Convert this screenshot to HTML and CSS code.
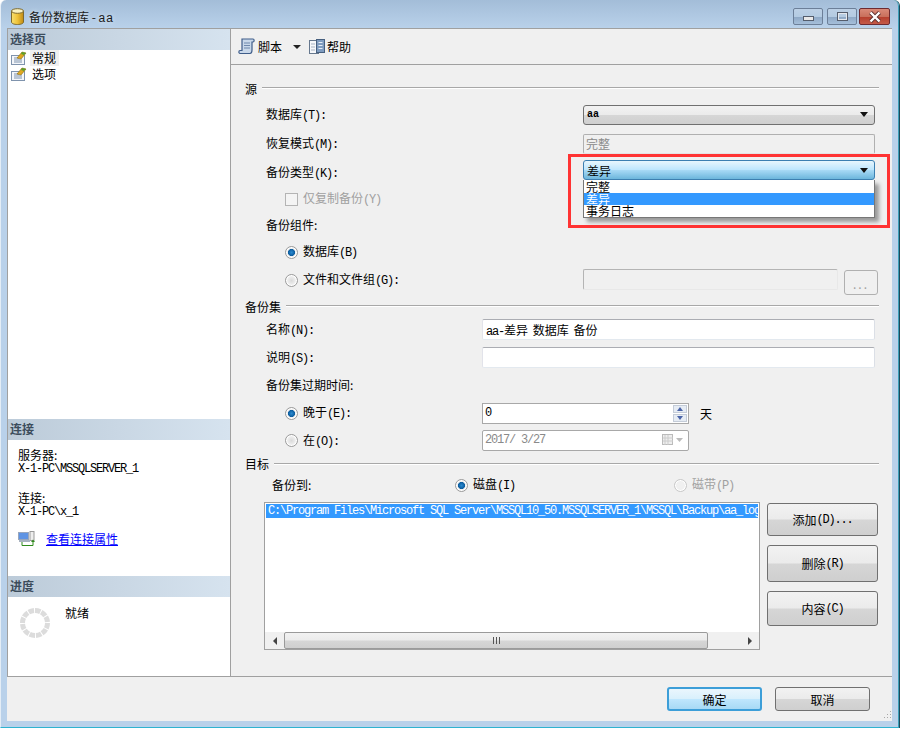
FILE: index.html
```html
<html>
  <head>
    <meta charset="utf-8">
    <link rel="stylesheet" href="styles.css">
    <title>备份数据库 - aa</title>
  </head>
  <body>
    <div class="window">
      <div class="titlebar">
        <svg class="dbicon" width="13" height="17" viewBox="0 0 13 17">
          <defs>
            <linearGradient id="gold" x1="0" x2="1" y1="0" y2="0">
              <stop offset="0" stop-color="#f8e070"/>
              <stop offset=".5" stop-color="#eec23a"/>
              <stop offset="1" stop-color="#c08a14"/>
            </linearGradient>
          </defs>
          <path d="M.5 3v11c0 1.500 2.500 2.500 6 2.500s6-1 6-2.500V3z" fill="url(#gold)" stroke="#7e6a2c"/>
          <ellipse cx="6.500" cy="3" rx="6" ry="2.300" fill="#fbf2c0" stroke="#7e6a2c"/>
        </svg>
        <span class="title">备份数据库 - <span class="titleLat">aa</span></span>
        <div class="capbtns">
          <div class="capbtn minbtn"><span class="glyphMin"></span></div>
          <div class="capbtn"><span class="glyphMax"></span></div>
          <div class="capbtn closebtn">
            <svg width="14" height="12" viewBox="0 0 14 12"><path d="M2.500 1.500l9 9M11.500 1.500l-9 9" stroke="#5a3030" stroke-width="4"/><path d="M2.500 1.500l9 9M11.500 1.500l-9 9" stroke="#fff" stroke-width="2.400"/></svg>
          </div>
        </div>
      </div>

      <div class="dialog">
        <div class="main">
          <div class="sidebar">
            <div class="sideHead">选择页</div>
            <div class="pages">
              <div class="pageItem">
                <svg class="pageIcon" width="16" height="14" viewBox="0 0 16 14"><use href="#pageGlyph"/></svg>
                <span class="pageText selected">常规</span>
              </div>
              <div class="pageItem">
                <svg class="pageIcon" width="16" height="14" viewBox="0 0 16 14"><use href="#pageGlyph"/></svg>
                <span class="pageText">选项</span>
              </div>
            </div>
            <div class="sideHead">连接</div>
            <div class="connBox">
              <div class="connLine">服务器:</div>
              <div class="connLine lat">X-1-PC\MSSQLSERVER_1</div>
              <div class="connLine connGap">连接:</div>
              <div class="connLine lat">X-1-PC\x_1</div>
              <div class="connLink">
                <svg width="18" height="15" viewBox="0 0 18 15">
                  <rect x="0.500" y="1.500" width="10" height="7" fill="#5f94e4" stroke="#98a6bc"/>
                  <rect x="12" y="0.500" width="4" height="9" fill="#eee" stroke="#9a9a9a"/>
                  <path d="M1 10h11" stroke="#a8b2c0" stroke-width="2"/>
                  <path d="M4 11v3.500h11v-4" fill="none" stroke="#2f8a1c"/>
                  <path d="M13 11l2-2.500 2 2.500z" fill="#2f8a1c"/>
                </svg>
                <a class="link" href="#">查看连接属性</a>
              </div>
            </div>
            <div class="sideHead">进度</div>
            <div class="progressBox">
              <svg width="30" height="30" viewBox="0 0 30 30">
                <circle cx="15" cy="15" r="12.500" fill="none" stroke="#dcdcdc" stroke-width="5" stroke-dasharray="5.500 1"/>
              </svg>
              <span class="ready">就绪</span>
            </div>
          </div>

          <div class="content">
            <div class="toolbar">
              <svg width="18" height="17" viewBox="0 0 18 17">
                <path d="M4 1h11c1.500 0 1.500 3 0 3h-1v8c0 1.500-.5 3.500-2 3.500H2c-1.500 0-1.500-3 0-3h2z" fill="#c9d8ea" stroke="#3f5d8a" stroke-width="1.200"/>
                <path d="M6 5h6M6 7.500h6M6 10h6" stroke="#6f88ac"/>
              </svg>
              <span class="toolText">脚本</span>
              <span class="toolArrow"></span>
              <svg class="helpIcon" width="16" height="16" viewBox="0 0 16 16">
                <rect x="0.500" y="1.500" width="9" height="13" fill="#f6f8fb" stroke="#66788e"/>
                <rect x="7.500" y="0.500" width="8" height="13" fill="#7f9cc0" stroke="#47607f"/>
                <path d="M9.500 3.500h4M9.500 6.500h4M9.500 9.500h4" stroke="#e6edf6"/>
                <path d="M2 5h4M2 8h4M2 11h4" stroke="#a8b4c4"/>
              </svg>
              <span class="toolText">帮助</span>
            </div>

            <div class="pane">
              <div class="groupHead r20"><span>源</span><i></i></div>
              <div class="row r33">
                <label class="col2">数据库<span class="lat">(T):</span></label>
                <div class="combo"><span class="lat comboLat">aa</span><b class="arrow"></b></div>
              </div>
              <div class="row r25">
                <label class="col2">恢复模式<span class="lat">(M):</span></label>
                <div class="readonly">完整</div>
              </div>
              <div class="row r28">
                <label class="col2 typeLab">备份类型<span class="lat">(K):</span></label>
                <div class="comboWrap">
                  <div class="combo active"><span>差异</span><b class="arrow"></b></div>
                  <ul class="dropdown">
                    <li>完整</li>
                    <li class="picked">差异</li>
                    <li>事务日志</li>
                  </ul>
                  <div class="redBox"></div>
                </div>
              </div>
              <div class="row r30 sub">
                <span class="check"></span>
                <label class="off">仅复制备份<span class="lat">(Y)</span></label>
              </div>
              <div class="row r24 lab">备份组件:</div>
              <div class="row r28 sub">
                <span class="radio on"></span>
                <label>数据库<span class="lat">(B)</span></label>
              </div>
              <div class="row r28 sub">
                <span class="radio"></span>
                <label class="fileLab">文件和文件组<span class="lat">(G):</span></label>
                <div class="fileInput"></div>
                <div class="dotsBtn">...</div>
              </div>

              <div class="groupHead r24"><span>备份集</span><i></i></div>
              <div class="row r22">
                <label class="col1">名称<span class="lat">(N):</span></label>
                <div class="input"><span class="lat">aa-</span>差异 数据库 备份</div>
              </div>
              <div class="row r34">
                <label class="col1">说明<span class="lat">(S):</span></label>
                <div class="input"></div>
              </div>
              <div class="row r22 lab expiry">备份集过期时间:</div>
              <div class="row r34 sub">
                <span class="radio on"></span>
                <label class="dateLab">晚于<span class="lat">(E):</span></label>
                <div class="spin">
                  <span class="lat">0</span>
                  <div class="spinBtns"><b class="up"></b><b class="down"></b></div>
                </div>
                <span class="unit">天</span>
              </div>
              <div class="row r20 sub">
                <span class="radio"></span>
                <label class="dateLab onDate">在<span class="lat">(O):</span></label>
                <div class="date">
                  <span class="lat">2017/ 3/27</span>
                  <svg class="calIcon" width="24" height="12" viewBox="0 0 24 12">
                    <rect x="0.500" y="0.500" width="10" height="10" fill="#eee" stroke="#bbb"/>
                    <path d="M3 1v10M6 1v10M1 4h10M1 7h10" stroke="#ccc"/>
                    <path d="M14 4h7l-3.500 4z" fill="#bbb"/>
                  </svg>
                </div>
              </div>

              <div class="groupHead r28 destHead"><span>目标</span><i></i></div>
              <div class="row r14 destRow">
                <label class="destLab">备份到:</label>
                <span class="radio on"></span>
                <label class="diskLab">磁盘<span class="lat">(I)</span></label>
                <span class="radio offRadio"></span>
                <label class="off">磁带<span class="lat">(P)</span></label>
              </div>

              <div class="dest">
                <div class="list">
                  <div class="listBody"><div class="listItem lat">C:\Program Files\Microsoft SQL Server\MSSQL10_50.MSSQLSERVER_1\MSSQL\Backup\aa_log</div></div>
                  <div class="hscroll">
                    <b class="scrollLeft"></b>
                    <div class="thumb"><em></em></div>
                    <b class="scrollRight"></b>
                  </div>
                </div>
                <div class="destBtns">
                  <div class="btn btnAdd">添加<span class="lat">(D)...</span></div>
                  <div class="btn btnDel">删除<span class="lat">(R)</span></div>
                  <div class="btn btnProps">内容<span class="lat">(C)</span></div>
                </div>
              </div>
            </div>
          </div>
        </div>

        <div class="footer">
          <div class="btn okBtn">确定</div>
          <div class="btn cancelBtn">取消</div>
          <svg class="grip" width="10" height="10" viewBox="0 0 10 10">
            <path d="M8 1h1v1H8zM5 4h1v1H5zM8 4h1v1H8zM2 7h1v1H2zM5 7h1v1H5zM8 7h1v1H8z" fill="#a8a8a8"/>
          </svg>
        </div>
      </div>
    </div>

    <svg width="0" height="0" class="defs">
      <defs>
        <g id="pageGlyph">
          <rect x="0.500" y="4.500" width="13" height="9" fill="#f4f6fa" stroke="#7f93ad"/>
          <path d="M3 7h5M3 9h8M3 11h8" stroke="#7f93ad"/>
          <path d="M6 7l5-6 4 1-5 6z" fill="#e0a820" stroke="#8a6a10" stroke-width=".6"/>
          <path d="M11 1l4 1-2 2-3-1z" fill="#5aa02c"/>
        </g>
      </defs>
    </svg>
  </body>
</html>
```

FILE: styles.css
```css
* {
  box-sizing: border-box;
}
html, body {
  margin: 0;
  background: #fff;
}
body {
  width: 903px;
  height: 740px;
  overflow: hidden;
  font-family: "Liberation Mono", "Noto Sans CJK SC", monospace;
  font-size: 12px;
  color: #000;
}
label {
  display: block;
  margin-bottom: 2px;
}
.defs {
  display: block;
}

.lat {
  font-family: "Liberation Mono", monospace;
  font-size: 12px;
  letter-spacing: -1.2px;
}
.window {
  width: 899px;
  height: 728px;
  background: linear-gradient(#a3bdd8 0, #b9d1ea 28px);
  border-left: 1px solid #e4edf6;
  border-right: 1px solid #3d9fb8;
  border-bottom: 1px solid #2fb3d0;
  border-radius: 6px 6px 0 0;
  box-shadow: 1px 0 0 #1e4a5c;
  display: flex;
  flex-direction: column;
  padding: 0 6px 6px 6px;
}
.titlebar {
  height: 28px;
  flex: none;
  display: flex;
  align-items: center;
  padding: 0 0 0 4px;
}
.dbicon {
  margin-top: 4px;
}
.title {
  margin-left: 5px;
  margin-top: 4px;
  font-family: "Noto Sans CJK SC", sans-serif;
  font-size: 12px;
  color: #1a1a1a;
  text-shadow: 0 0 4px #dfeaf6;
}
.titleLat {
  font-family: "Liberation Sans", sans-serif;
  letter-spacing: 1px;
}
.capbtns {
  margin-left: auto;
  margin-right: 2px;
  margin-top: 5px;
  display: flex;
  gap: 2px;
}
.capbtn {
  width: 30px;
  height: 17px;
  border: 1px solid #6c7f98;
  border-radius: 2px;
  background: linear-gradient(#bcd0e5 0, #b4cbe2 50%, #8fa9c6 55%, #a6bfda 100%);
  display: flex;
  align-items: center;
  justify-content: center;
}
.minbtn {
  margin-right: 2px;
}
.glyphMin {
  width: 11px;
  height: 5px;
  margin-top: 4px;
  background: #e8e8e8;
  border: 1px solid #555d6c;
}
.glyphMax {
  width: 11px;
  height: 9px;
  border: 2px solid #e4e8ee;
  outline: 1px solid #555d6c;
  outline-offset: -1px;
}
.closebtn {
  width: 31px;
  border-color: #6e2a30;
  background: linear-gradient(#d98a78 0, #c9705c 50%, #b6402e 55%, #c45a48 100%);
}

.dialog {
  flex: 1;
  min-height: 0;
  background: #f0f0f0;
  display: flex;
  flex-direction: column;
}
.main {
  height: 649px;
  flex: none;
  display: flex;
  border-top: 1px solid #a0a0a0;
  border-bottom: 1px solid #a0a0a0;
}

.sidebar {
  width: 224px;
  flex: none;
  background: #fff;
  border-right: 1px solid #a0a0a0;
  border-left: 1px solid #a0a0a0;
  display: flex;
  flex-direction: column;
}
.sideHead {
  height: 21px;
  flex: none;
  padding-left: 2px;
  line-height: 20px;
  font-family: "Noto Sans CJK SC", sans-serif;
  font-weight: 700;
  font-size: 12px;
  color: #3c4c5c;
  background: linear-gradient(90deg, #bccbd9, #d6e3ef);
}
.pages {
  height: 369px;
  flex: none;
}
.pageItem {
  height: 16px;
  display: flex;
  align-items: center;
  padding-left: 3px;
}
.pageIcon {
  flex: none;
}
.pageText {
  margin-left: 3px;
  padding: 0 3px 0 2px;
  line-height: 16px;
  font-family: "Noto Sans CJK SC", sans-serif;
}
.selected {
  background: #f0f0f0;
}
.connBox {
  height: 136px;
  flex: none;
  padding: 9px 0 0 10px;
}
.connLine {
  line-height: 12px;
  font-family: "Noto Sans CJK SC", sans-serif;
}
.connLine.lat {
  margin-top: 2px;
  font-family: "Liberation Mono", monospace;
}
.connGap {
  margin-top: 17px;
}
.connLink {
  display: flex;
  align-items: center;
  margin-top: 12px;
  gap: 10px;
}
.link {
  color: #0000ff;
  text-decoration: underline;
  font-family: "Noto Sans CJK SC", sans-serif;
}
.progressBox {
  flex: 1;
  display: flex;
  align-items: flex-start;
  padding: 11px 0 0 12px;
}
.ready {
  margin-left: 15px;
  margin-top: -4px;
  font-family: "Noto Sans CJK SC", sans-serif;
}

.content {
  flex: 1;
  min-width: 0;
  display: flex;
  flex-direction: column;
}
.toolbar {
  height: 36px;
  flex: none;
  display: flex;
  align-items: center;
  padding-left: 7px;
  border-bottom: 1px solid #a0a0a0;
  font-family: "Noto Sans CJK SC", sans-serif;
}
.toolText {
  margin-left: 2px;
}
.toolArrow {
  width: 0;
  height: 0;
  margin: 1px 9px 0 11px;
  border: 4px solid transparent;
  border-top: 4px solid #222;
  border-bottom: 0;
}
.helpIcon {
  flex: none;
  margin-left: -1px;
}

.pane {
  flex: 1;
  padding: 13px 0 0 14px;
  font-family: "Noto Sans CJK SC", sans-serif;
  position: relative;
}
.row {
  display: flex;
  align-items: center;
}
.r14 { height: 14px; }
.r20 { height: 20px; }
.r22 { height: 22px; }
.r24 { height: 24px; }
.r25 { height: 25px; }
.r28 { height: 28px; }
.r30 { height: 30px; }
.r33 { height: 33px; }
.r34 { height: 34px; }

.groupHead {
  display: flex;
  align-items: center;
  width: 634px;
  gap: 5px;
}
.groupHead i {
  flex: 1;
  height: 2px;
  background: #a8a8a8;
  border-bottom: 1px solid #fff;
}
.destHead span {
  margin-bottom: 2px;
}
.row.lab {
  padding: 0 0 3px 21px;
}
.row.expiry {
  padding-bottom: 1px;
}
.col2 {
  width: 338px;
  flex: none;
  padding-left: 21px;
}
.typeLab {
  margin: 3px 0 0;
}
.col1 {
  width: 237px;
  flex: none;
  padding-left: 21px;
  margin-bottom: 0;
}
.sub {
  padding-left: 40px;
}
.off {
  color: #a0a0a0;
}

.combo, .readonly, .comboWrap {
  width: 292px;
}
.comboWrap {
  position: relative;
}
.combo {
  height: 20px;
  display: flex;
  align-items: center;
  padding: 0 6px 0 3px;
  border: 1px solid #707070;
  border-radius: 3px;
  background: linear-gradient(#f2f2f2 0, #ebebeb 48%, #d6d6d6 52%, #cfcfcf 100%);
}
.comboLat {
  font-size: 10px;
  font-weight: 700;
  letter-spacing: 0;
}
.combo.active {
  border-color: #3c7fb1;
  background: linear-gradient(#e8f6fd 0, #bee6fd 48%, #a7d9f5 52%, #6cb6dc 100%);
}
.arrow {
  margin-left: auto;
  width: 0;
  height: 0;
  border: 4px solid transparent;
  border-top: 5px solid #111;
  border-bottom: 0;
}
.readonly {
  height: 20px;
  padding-left: 2px;
  line-height: 18px;
  color: #8a8a8a;
  border: 1px solid #b0b0b0;
  border-bottom-color: #e4e4e4;
  border-radius: 2px;
}

/* open list of the backup type combo, hangs over the rows below */
.dropdown {
  position: absolute;
  left: 0;
  top: 20px;
  width: 292px;
  margin: 0;
  padding: 1px 0 0;
  list-style: none;
  background: #fff;
  border: 1px solid #777;
  border-top: 0;
  box-shadow: 4px 4px 4px #999;
  z-index: 2;
}
.dropdown li {
  height: 12px;
  line-height: 12px;
  padding-left: 2px;
}
.dropdown li.picked {
  color: #fff;
  background: #3399ff;
}
.redBox {
  position: absolute;
  left: -15px;
  top: -6px;
  width: 322px;
  height: 74px;
  border: 3px solid #ff3333;
  z-index: 3;
}

.check {
  width: 13px;
  height: 13px;
  flex: none;
  border: 1px solid #b4b4b4;
  background: #f4f4f4;
  margin-right: 5px;
}
.radio {
  width: 13px;
  height: 13px;
  flex: none;
  border-radius: 50%;
  border: 1px solid #9a9a9a;
  background: radial-gradient(circle closest-side, #dadada 0, #f6f6f6 100%);
  box-shadow: inset 0 0 0 1px #fff;
  margin-right: 5px;
  display: block;
}
.radio.on {
  background: radial-gradient(circle closest-side, #2a8ad0 0, #0a5a9c 62%, #eee 68%);
}
.offRadio {
  border-color: #c8c8c8;
  background: #f0f0f0;
}
.fileLab {
  width: 280px;
  flex: none;
}
.fileInput {
  width: 255px;
  height: 21px;
  margin-top: -2px;
  flex: none;
  border: 1px solid #b4b4b4;
  border-bottom-color: #e8e8e8;
  border-right-color: #e8e8e8;
  border-radius: 2px;
}
.dotsBtn {
  width: 34px;
  height: 25px;
  margin: 5px 0 0 6px;
  flex: none;
  border: 1px solid #b0b0b0;
  border-radius: 3px;
  text-align: center;
  line-height: 26px;
  color: #a0a0a0;
  letter-spacing: 2px;
}
.input {
  width: 393px;
  height: 21px;
  padding-left: 3px;
  line-height: 19px;
  word-spacing: 2px;
  background: #fff;
  border: 1px solid #abadb3;
  border-bottom-color: #e3e9ef;
  border-left-color: #e2e3ea;
  border-right-color: #dbdfe6;
  border-radius: 2px;
}
.dateLab {
  width: 179px;
  flex: none;
}
.onDate {
  margin-bottom: 0;
}
.spin, .date {
  width: 207px;
  height: 21px;
  flex: none;
  display: flex;
  align-items: center;
  padding-left: 2px;
  border: 1px solid #a8a8a8;
  background: #fff;
}
.date {
  border-radius: 2px;
  color: #8a8a8a;
}
.spinBtns {
  margin-left: auto;
  margin-right: 1px;
  width: 14px;
  height: 17px;
  display: flex;
  flex-direction: column;
  gap: 1px;
}
.spinBtns b {
  flex: 1;
  background: #e6ecf4;
  border: 1px solid #c4ccd8;
  display: flex;
  justify-content: center;
  align-items: center;
}
.spinBtns .up::after, .spinBtns .down::after {
  content: "";
  border: 3px solid transparent;
}
.spinBtns .up::after {
  border-top: 0;
  border-bottom: 4px solid #4a64a8;
}
.spinBtns .down::after {
  border-bottom: 0;
  border-top: 4px solid #4a64a8;
}
.unit {
  margin-left: 11px;
  margin-top: 1px;
}
.calIcon {
  margin-left: auto;
  margin-right: 2px;
}
.destRow {
  padding-left: 27px;
}
.destLab {
  width: 183px;
  flex: none;
}
.diskLab {
  width: 201px;
  flex: none;
}

.dest {
  display: flex;
  margin-top: 10px;
  padding-left: 19px;
}
.list {
  width: 496px;
  height: 148px;
  flex: none;
  display: flex;
  flex-direction: column;
  background: #fff;
  border: 1px solid #a0a0a0;
}
.listBody {
  flex: 1;
  padding: 1px;
  overflow: hidden;
}
.listItem {
  height: 14px;
  line-height: 14px;
  padding-left: 2px;
  color: #fff;
  background: #3399ff;
  white-space: nowrap;
  overflow: hidden;
}
.hscroll {
  height: 17px;
  flex: none;
  display: flex;
  align-items: center;
  background: #f0f0f0;
}
.scrollLeft, .scrollRight {
  width: 19px;
  height: 17px;
  flex: none;
  display: flex;
  align-items: center;
  justify-content: center;
}
.scrollLeft::after {
  content: "";
  border: 4px solid transparent;
  border-left: 0;
  border-right: 4px solid #444;
}
.scrollRight {
  margin-left: auto;
}
.scrollRight::after {
  content: "";
  border: 4px solid transparent;
  border-right: 0;
  border-left: 4px solid #444;
}
.thumb {
  width: 424px;
  height: 17px;
  flex: none;
  border: 1px solid #9a9a9a;
  border-radius: 2px;
  background: linear-gradient(#f2f2f2 0, #ebebeb 48%, #d6d6d6 52%, #cfcfcf 100%);
  display: flex;
  align-items: center;
  justify-content: center;
}
.thumb em {
  width: 7px;
  height: 7px;
  border-left: 1px solid #555;
  border-right: 1px solid #555;
  background: linear-gradient(90deg, transparent 2px, #555 2px, #555 3px, transparent 3px);
}
.destBtns {
  margin-left: 7px;
  padding-top: 1px;
  display: flex;
  flex-direction: column;
}
.btn {
  border: 1px solid #707070;
  border-radius: 3px;
  background: linear-gradient(#f2f2f2 0, #ebebeb 48%, #d6d6d6 52%, #cfcfcf 100%);
  display: flex;
  align-items: center;
  justify-content: center;
  font-family: "Noto Sans CJK SC", sans-serif;
}
.destBtns .btn {
  width: 111px;
}
.btnAdd { height: 33px; }
.btnDel { height: 37px; margin-top: 9px; }
.btnProps { height: 35px; margin-top: 9px; }

.footer {
  flex: 1;
  position: relative;
  display: flex;
  align-items: flex-start;
  padding: 10px 0 0 660px;
  gap: 13px;
}
.okBtn, .cancelBtn {
  width: 95px;
  height: 24px;
}
.okBtn {
  border-color: #3c9ed8;
  border-width: 2px;
  background: linear-gradient(#eaf6fd 0, #d9f0fc 48%, #bee6fd 52%, #a7d9f5 100%);
}
.grip {
  position: absolute;
  right: 0;
  bottom: 1px;
}
```
